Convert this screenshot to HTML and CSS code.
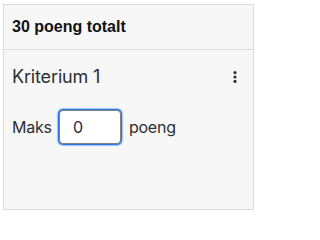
FILE: index.html
```html
<!DOCTYPE html>
<html lang="no">
<head>
<meta charset="utf-8">
<title>Kriterier</title>
<link rel="stylesheet" href="styles.css">
</head>
<body>
<section class="card">
  <header class="card-header">30 poeng totalt</header>
  <div class="card-body">
    <div class="criterion-head">
      <span class="criterion-title">Kriterium 1</span>
      <button class="menu-btn" aria-label="Meny">
        <svg width="16" height="16" viewBox="0 0 16 16"><circle cx="8" cy="3.6" r="1.6" fill="#333"/><circle cx="8" cy="8" r="1.6" fill="#333"/><circle cx="8" cy="12.4" r="1.6" fill="#333"/></svg>
      </button>
    </div>
    <div class="max-row">
      <label class="max-label" for="maks">Maks</label>
      <input id="maks" class="max-input" type="text" value="0">
      <span class="max-unit">poeng</span>
    </div>
  </div>
</section>
</body>
</html>
```
FILE: styles.css
```css
html, body {
  margin: 0;
  padding: 0;
  background: #ffffff;
}
body {
  padding: 4px 1px 0 3px;
  font-family: Inter, "Noto Sans", sans-serif;
  color: #212529;
}
.card {
  box-sizing: border-box;
  width: 251px;
  height: 206px;
  background: #f7f7f7;
  border: 1px solid #dcdcdc;
}
.card-header {
  box-sizing: border-box;
  border-bottom: 1px solid #dcdcdc;
  height: 45px;
  padding: 0 8px;
  display: flex;
  align-items: center;
  font-family: "Liberation Sans", Arial, sans-serif;
  font-weight: bold;
  font-size: 16px;
  color: #111;
}
.card-body {
  padding: 16px 8px 0 8px;
}
.criterion-head {
  display: flex;
  align-items: center;
  justify-content: space-between;
  height: 22px;
}
.criterion-title {
  font-size: 18px;
  line-height: 22px;
  letter-spacing: -0.15px;
  color: #2b2f33;
}
.menu-btn {
  border: 0;
  background: none;
  padding: 0;
  width: 16px;
  height: 16px;
  margin-right: 2px;
  display: flex;
}
.max-row {
  margin-top: 22px;
  display: flex;
  align-items: center;
  font-size: 16px;
  letter-spacing: -0.2px;
  color: #2b2f33;
}
.max-input {
  box-sizing: border-box;
  width: 62px;
  height: 34px;
  margin: 0 8px 0 7px;
  border: 1px solid #808080;
  border-radius: 4px;
  background: #fff;
  padding: 0 13px;
  font-family: Inter, "Noto Sans", sans-serif;
  font-size: 16px;
  color: #1f2a44;
  box-shadow: 0 0 0 1px #2a78e4, 0 0 1px 2px rgba(90, 150, 240, 0.55);
  outline: none;
}
```
